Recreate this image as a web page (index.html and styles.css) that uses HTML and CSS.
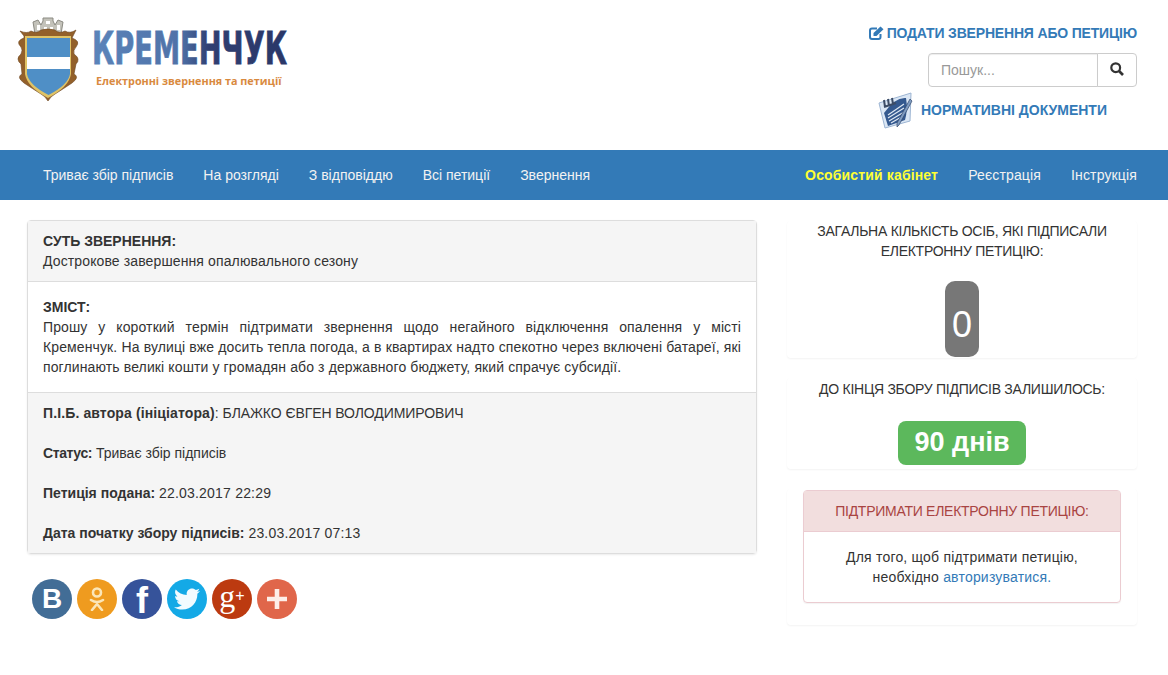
FILE: index.html
```html
<!DOCTYPE html>
<html lang="uk">
<head>
    <meta charset="UTF-8">
    <title>Електронні звернення та петиції</title>
    <link rel="stylesheet" href="styles.css">
</head>
<body>
<header class="site-header">
    <a class="logo" href="#">
        <svg class="logo-crest" width="62" height="85" viewBox="0 0 62 85">
            <!-- корона -->
            <path d="M18 17 L16 5 L21 3 L24 8 L26 4 L26 1 L36 1 L36 4 L38 8 L41 3 L46 5 L44 17 Z" fill="#c3c2ba" stroke="#8b8a82" stroke-width="1"/>
            <path d="M20 8h3v5h-3zM29 4h4v3h-4zM27 10h3v4h-3zM33 10h3v4h-3zM40 8h3v5h-3z" fill="#fff"/>
            <!-- картуш -->
            <path d="M7 19 L3 14 Q10 17 14 14 Q20 17 24 13 Q31 11 38 13 Q42 17 48 14 Q53 17 59 13 L55 21 Q64 24 59 30 Q56 33 57 37 Q64 42 59 47 L57 57 Q63 60 55 66 Q46 72 38 77 Q34 79 31 84 Q28 79 24 77 Q16 72 7 66 Q-1 60 5 57 L4 47 Q-2 42 4 37 Q6 33 4 30 Q-2 24 7 21 Z" fill="#93602a" stroke="#6b4420" stroke-width=".6"/>
            <path d="M8 19 H54 V57 Q52 70 31 81 Q10 70 8 57 Z" fill="#dfc366"/>
            <!-- щит -->
            <path d="M10 21 H53 V57 Q51 68 31.5 78 Q12 68 10 57 Z" fill="#4f8fc6"/>
            <rect x="10" y="40" width="43" height="12" fill="#fff"/>
        </svg>
        <div class="logo-text">
            <svg class="logo-word" width="197" height="36" viewBox="0 0 197 36">
                <defs>
                    <linearGradient id="wordFill" x1="0" y1="0" x2="1" y2="0">
                        <stop offset="0" stop-color="#5b84ba"/>
                        <stop offset="0.45" stop-color="#4f72a8"/>
                        <stop offset="0.6" stop-color="#303f72"/>
                        <stop offset="1" stop-color="#2a3768"/>
                    </linearGradient>
                </defs>
                <text x="0" y="34" textLength="195" lengthAdjust="spacingAndGlyphs" fill="url(#wordFill)" stroke="url(#wordFill)" class="logo-word-text">КРЕМЕНЧУК</text>
            </svg>
            <div class="logo-tagline">Електронні звернення та петиції</div>
        </div>
    </a>
    <div class="header-right">
        <a class="submit-link" href="#">
            <svg width="15" height="14" viewBox="0 0 15 14">
                <path d="M11.5 8 V11 Q11.5 13 9.5 13 H3 Q1 13 1 11 V4.5 Q1 2.5 3 2.5 H8" fill="none" stroke="#337ab7" stroke-width="2"/>
                <path d="M4.5 7 L11.5 .5 L14.5 3.2 L7.5 10 L4.5 10 Z" fill="#337ab7"/>
            </svg>
            ПОДАТИ ЗВЕРНЕННЯ АБО ПЕТИЦІЮ
        </a>
        <form class="search">
            <input class="search-input" type="text" placeholder="Пошук...">
            <button class="search-btn" type="button">
                <svg width="14" height="14" viewBox="0 0 14 14">
                    <circle cx="5.7" cy="5.7" r="4.4" fill="none" stroke="#333" stroke-width="2.2"/>
                    <path d="M9 9 L13 13" stroke="#333" stroke-width="2.6"/>
                </svg>
            </button>
        </form>
        <a class="docs-link" href="#">
            <svg width="36" height="38" viewBox="0 0 36 38">
                <path d="M2 12 L34 2 L33 30 L8 37 Z" fill="#dbe7f5" stroke="#9db5d3" stroke-width="1"/>
                <path d="M7 22 Q18 6 29 7 Q31 18 28 29 L11 35 Z" fill="#34598f"/>
                <path d="M11 24 L27 13 M11 27 L27 17 M12 30 L27 21 M14 32 L26 25" stroke="#dfe8f3" stroke-width="1.2"/>
                <path d="M7 9 L8 16 M11 8 L12 15 M15 7 L16 13 M7 16 L19 12" stroke="#3c4c66" stroke-width="2"/>
                <path d="M33 8 L35 10 L22 34 L20 36 L20 32 Z" fill="#7f9cc2" stroke="#34486a" stroke-width=".7"/>
            </svg>
            <span>НОРМАТИВНІ ДОКУМЕНТИ</span>
        </a>
    </div>
</header>

<nav class="navbar">
    <ul class="nav-list">
        <li><a href="#">Триває збір підписів</a></li>
        <li><a href="#">На розгляді</a></li>
        <li><a href="#">З відповіддю</a></li>
        <li><a href="#">Всі петиції</a></li>
        <li><a href="#">Звернення</a></li>
    </ul>
    <ul class="nav-list nav-list-right">
        <li><a class="nav-cabinet" href="#">Особистий кабінет</a></li>
        <li><a href="#">Реєстрація</a></li>
        <li><a href="#">Інструкція</a></li>
    </ul>
</nav>

<main class="content">
    <div class="left-col">
        <div class="panel">
            <div class="panel-head">
                <b>СУТЬ ЗВЕРНЕННЯ:</b><br>
                Дострокове завершення опалювального сезону
            </div>
            <div class="panel-body">
                <b>ЗМІСТ:</b><br>
                Прошу у короткий термін підтримати звернення щодо негайного відключення опалення у місті Кременчук. На вулиці вже досить тепла погода, а в квартирах надто спекотно через включені батареї, які поглинають великі кошти у громадян або з державного бюджету, який спрачує субсидії.
            </div>
            <div class="panel-foot">
                <p><b class="label-author">П.І.Б. автора (ініціатора)</b>: <span class="author-name">БЛАЖКО ЄВГЕН ВОЛОДИМИРОВИЧ</span></p>
                <p><b class="label-status">Статус:</b> Триває збір підписів</p>
                <p><b>Петиція подана:</b> <span class="date">22.03.2017 22:29</span></p>
                <p><b>Дата початку збору підписів:</b> <span class="date">23.03.2017 07:13</span></p>
            </div>
        </div>
        <div class="share">
            <a class="share-btn share-vk" href="#">B</a>
            <a class="share-btn share-ok" href="#">
                <svg width="16" height="24" viewBox="0 0 16 24">
                    <circle cx="8" cy="5.5" r="4" fill="none" stroke="#fbe6b8" stroke-width="2.6"/>
                    <path d="M2 13 Q8 17 14 13 M8 15.5 V17 M3 23 L8 17 L13 23" fill="none" stroke="#fbe6b8" stroke-width="2.6" stroke-linecap="round"/>
                </svg>
            </a>
            <a class="share-btn share-fb" href="#">f</a>
            <a class="share-btn share-tw" href="#">
                <svg width="26" height="26" viewBox="0 0 24 24">
                    <path fill="#f2fbff" d="M23.954 4.569c-.885.389-1.83.654-2.825.775 1.014-.611 1.794-1.574 2.163-2.723-.951.555-2.005.959-3.127 1.184-.896-.959-2.173-1.559-3.591-1.559-2.717 0-4.92 2.203-4.92 4.917 0 .39.045.765.127 1.124C7.691 8.094 4.066 6.13 1.64 3.161c-.427.722-.666 1.561-.666 2.475 0 1.71.87 3.213 2.188 4.096-.807-.026-1.566-.248-2.228-.616v.061c0 2.385 1.693 4.374 3.946 4.827-.413.111-.849.171-1.296.171-.314 0-.615-.03-.916-.086.631 1.953 2.445 3.377 4.604 3.417-1.68 1.319-3.809 2.105-6.102 2.105-.39 0-.779-.023-1.17-.067 2.189 1.394 4.768 2.209 7.557 2.209 9.054 0 13.999-7.496 13.999-13.986 0-.209 0-.42-.015-.63.961-.689 1.8-1.56 2.46-2.548l-.047-.02z"/>
                </svg>
            </a>
            <a class="share-btn share-gp" href="#">g<sup>+</sup></a>
            <a class="share-btn share-more" href="#">
                <svg width="24" height="24" viewBox="0 0 24 24">
                    <path d="M12 2 V22 M2 12 H22" stroke="#fdeee8" stroke-width="4.6"/>
                </svg>
            </a>
        </div>
    </div>

    <aside class="right-col">
        <div class="card card-count">
            <div class="card-title">ЗАГАЛЬНА КІЛЬКІСТЬ ОСІБ, ЯКІ ПІДПИСАЛИ ЕЛЕКТРОННУ ПЕТИЦІЮ:</div>
            <span class="count-badge">0</span>
        </div>
        <div class="card card-days">
            <div class="card-title">ДО КІНЦЯ ЗБОРУ ПІДПИСІВ ЗАЛИШИЛОСЬ:</div>
            <span class="days-badge">90 днів</span>
        </div>
        <div class="card card-support">
            <div class="support-panel">
                <div class="support-head">ПІДТРИМАТИ ЕЛЕКТРОННУ ПЕТИЦІЮ:</div>
                <div class="support-body">
                    Для того, щоб підтримати петицію,<br>
                    необхідно <a href="#">авторизуватися.</a>
                </div>
            </div>
        </div>
    </aside>
</main>
</body>
</html>
```

FILE: styles.css
```css
* {
    box-sizing: border-box;
}

body {
    margin: 0;
    font-family: "Liberation Sans", Arial, sans-serif;
    font-size: 14px;
    line-height: 20px;
    color: #333;
    background-color: #fff;
}

a {
    color: #337ab7;
    text-decoration: none;
}

/* шапка */
.site-header {
    height: 150px;
    display: flex;
    justify-content: space-between;
    padding: 17px 31px 0 17px;
}

.logo {
    display: flex;
    align-items: flex-start;
    gap: 13px;
    height: 85px;
}

.logo-crest {
    display: block;
    overflow: visible;
}

.logo-text {
    padding-top: 13px;
}

.logo-word {
    display: block;
    overflow: visible;
}

.logo-word-text {
    font-family: "DejaVu Sans", sans-serif;
    font-weight: bold;
    font-size: 44px;
    stroke-width: .8px;
}

.logo-tagline {
    margin: 7px 0 0 4px;
    font-family: "Open Sans", sans-serif;
    font-size: 10.8px;
    line-height: 16px;
    font-weight: bold;
    color: #d98a3f;
    white-space: nowrap;
}

.header-right {
    width: 320px;
    display: flex;
    flex-direction: column;
    align-items: flex-end;
}

.submit-link {
    display: flex;
    align-items: center;
    gap: 3px;
    margin-top: 6px;
    font-weight: bold;
    letter-spacing: -.18px;
    white-space: nowrap;
}

.search {
    display: flex;
    margin-top: 10px;
}

.search-input {
    width: 170px;
    height: 34px;
    padding: 6px 12px;
    font: inherit;
    color: #555;
    border: 1px solid #ccc;
    border-radius: 4px 0 0 4px;
    box-shadow: inset 0 1px 1px rgba(0, 0, 0, .075);
}

.search-input::placeholder {
    color: #999;
}

.search-btn {
    width: 40px;
    height: 34px;
    margin-left: -1px;
    padding: 0;
    background-color: #fff;
    border: 1px solid #ccc;
    border-radius: 0 4px 4px 0;
}

.docs-link {
    display: flex;
    align-items: center;
    gap: 8px;
    margin: 4px 30px 0 0;
    font-weight: bold;
}

/* меню */
.navbar {
    height: 50px;
    display: flex;
    justify-content: space-between;
    padding: 0 16px 0 28px;
    background-color: #337ab7;
}

.nav-list {
    display: flex;
    margin: 0;
    padding: 0;
    list-style: none;
}

.nav-list a {
    display: block;
    padding: 15px;
    color: #f2f2f2;
}

.nav-list-right a {
    letter-spacing: .15px;
}

.nav-list .nav-cabinet {
    color: #ffff33;
    font-weight: bold;
}

/* основна частина */
.content {
    display: flex;
    padding: 20px 31px 0 27px;
    gap: 30px;
}

.left-col {
    width: 730px;
}

.right-col {
    width: 350px;
    padding-top: 1px;
}

.panel {
    border: 1px solid #ddd;
    border-radius: 4px;
    box-shadow: 0 1px 2px rgba(0, 0, 0, .08);
}

.panel-head {
    padding: 10px 15px;
    letter-spacing: .12px;
    background-color: #f5f5f5;
    border-bottom: 1px solid #ddd;
}

.panel-body {
    padding: 15px;
    letter-spacing: .12px;
    text-align: justify;
}

.panel-head b,
.panel-body b {
    letter-spacing: 0;
}

.panel-foot {
    padding: 10px 15px;
    background-color: #f5f5f5;
    border-top: 1px solid #ddd;
}

.panel-foot p {
    margin: 0 0 20px;
}

.panel-foot p:last-child {
    margin-bottom: 0;
}

.label-author {
    letter-spacing: .12px;
}

.author-name {
    letter-spacing: -.08px;
}

.label-status {
    letter-spacing: -.4px;
}

.date {
    letter-spacing: .2px;
}

/* кнопки соцмереж */
.share {
    display: flex;
    gap: 5px;
    margin: 25px 0 0 5px;
}

.share-btn {
    width: 40px;
    height: 40px;
    display: flex;
    align-items: center;
    justify-content: center;
    border-radius: 50%;
    color: #fff;
    font-weight: bold;
}

.share-vk {
    background-color: #426d96;
    font-size: 28px;
}

.share-ok {
    background-color: #ef9b1f;
}

.share-fb {
    background-color: #36539a;
    font-size: 36px;
    padding-top: 4px;
}

.share-tw {
    background-color: #14a9e6;
}

.share-gp {
    background-color: #bc3a10;
    font-family: "Liberation Serif", serif;
    font-size: 32px;
    font-weight: normal;
    padding-bottom: 6px;
}

.share-gp sup {
    font-family: "Liberation Sans", sans-serif;
    font-size: 16px;
    line-height: 0;
}

.share-more {
    background-color: #e0664a;
}

/* права колонка */
.card {
    margin-bottom: 20px;
    text-align: center;
    background-color: #fff;
    border-radius: 4px;
    box-shadow: 0 1px 2px rgba(0, 0, 0, .05);
}

.card-title {
    padding: 0 20px;
    letter-spacing: -.27px;
}

.card-count {
    height: 137px;
}

.count-badge {
    display: inline-block;
    width: 34px;
    height: 76px;
    margin-top: 20px;
    padding-top: 20px;
    font-size: 36px;
    line-height: 48px;
    color: #fff;
    background-color: #777;
    border-radius: 10px;
}

.card-days {
    height: 91px;
    padding-top: 1px;
}

.days-badge {
    display: inline-block;
    width: 128px;
    height: 44px;
    margin-top: 22px;
    font-size: 27px;
    line-height: 42px;
    font-weight: bold;
    color: #fff;
    background-color: #5cb85c;
    border-radius: 8px;
}

.card-support {
    height: 136px;
    padding: 1px 16px 0;
}

.support-panel {
    border: 1px solid #ebccd1;
    border-radius: 4px;
    box-shadow: 0 1px 1px rgba(0, 0, 0, .05);
}

.support-head {
    padding: 10px 15px;
    letter-spacing: -.27px;
    color: #a94442;
    background-color: #f2dede;
    border-bottom: 1px solid #ebccd1;
}

.support-body {
    padding: 15px;
    letter-spacing: .2px;
}
```
